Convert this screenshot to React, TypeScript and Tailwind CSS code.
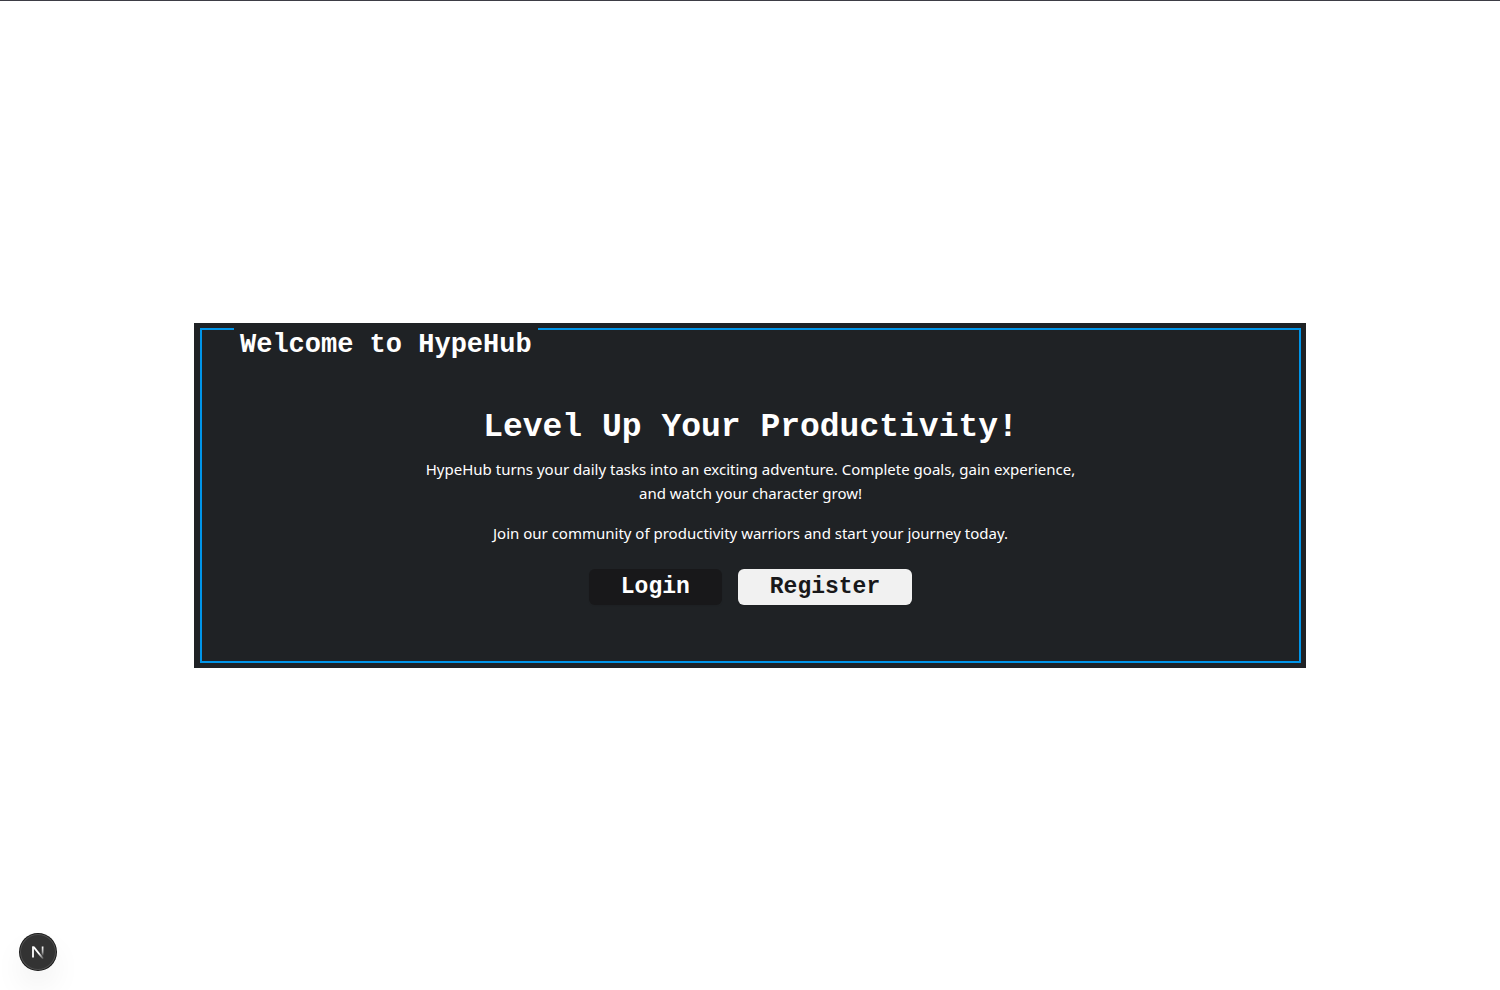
const pixel = "font-['Liberation_Mono','Courier_New',monospace] font-bold";

function DevBadge() {
  return (
    <button
      type="button"
      aria-label="Open Next.js Dev Tools"
      className="fixed bottom-5 left-5 flex size-9 items-center justify-center rounded-full bg-[#333333] shadow-[0_0_0_1px_#171717,inset_0_0_0_1px_rgba(255,255,255,0.14),0_16px_32px_-4px_rgba(0,0,0,0.1)]"
    >
      <svg width="14" height="14" viewBox="0 0 14 14" fill="none" aria-hidden="true">
        <defs>
          <linearGradient id="stem" x1="11.5" y1="1.5" x2="11.5" y2="11" gradientUnits="userSpaceOnUse">
            <stop stopColor="white" />
            <stop offset="0.6" stopColor="white" stopOpacity="0.6" />
            <stop offset="1" stopColor="white" stopOpacity="0" />
          </linearGradient>
          <linearGradient id="slash" x1="8" y1="8.5" x2="12.5" y2="14" gradientUnits="userSpaceOnUse">
            <stop stopColor="white" />
            <stop offset="1" stopColor="white" stopOpacity="0.1" />
          </linearGradient>
        </defs>
        <path d="M2 12.5V1.5" stroke="white" strokeWidth="1.8" />
        <path d="M1.4 1.5h2.1l9.3 11.8-1.4 .9L1.4 2.1Z" fill="url(#slash)" />
        <path d="M11.6 1.5v9.5" stroke="url(#stem)" strokeWidth="1.7" />
      </svg>
    </button>
  );
}

export default function App() {
  return (
    <div className="flex min-h-screen flex-col bg-white">
      <header className="h-px bg-[#3d3d45]" />
      <main className="flex flex-1 items-center justify-center px-4">
        <section className="w-full max-w-[1112px] bg-[#1f2225] py-[5px] pr-[5px] pl-[6px] text-white">
          <div className="border-2 border-[#0095e9] pb-14">
            <h2
              className={`${pixel} -mt-0.5 ml-8 w-fit bg-[#1f2225] px-1.5 text-[27px] leading-[34px]`}
            >
              Welcome to HypeHub
            </h2>
            <div className="mx-auto mt-12 flex max-w-2xl flex-col items-center text-center">
              <h1 className={`${pixel} text-[33px] leading-9`}>Level Up Your Productivity!</h1>
              <p className="mt-[11px] font-['Noto_Sans',sans-serif] text-[15px] leading-6">
                HypeHub turns your daily tasks into an exciting adventure. Complete goals, gain experience,
                <br />
                and watch your character grow!
              </p>
              <p className="mt-4 font-['Noto_Sans',sans-serif] text-[15px] leading-6">
                Join our community of productivity warriors and start your journey today.
              </p>
              <div className="mt-6 flex gap-4">
                <button
                  type="button"
                  className={`${pixel} h-9 rounded-md bg-[#18181a] px-8 text-[23px] leading-9 shadow-xs`}
                >
                  Login
                </button>
                <button
                  type="button"
                  className={`${pixel} h-9 rounded-md bg-[#f1f1f1] px-8 text-[23px] leading-9 text-[#18181a] shadow-xs`}
                >
                  Register
                </button>
              </div>
            </div>
          </div>
        </section>
      </main>
      <DevBadge />
    </div>
  );
}
